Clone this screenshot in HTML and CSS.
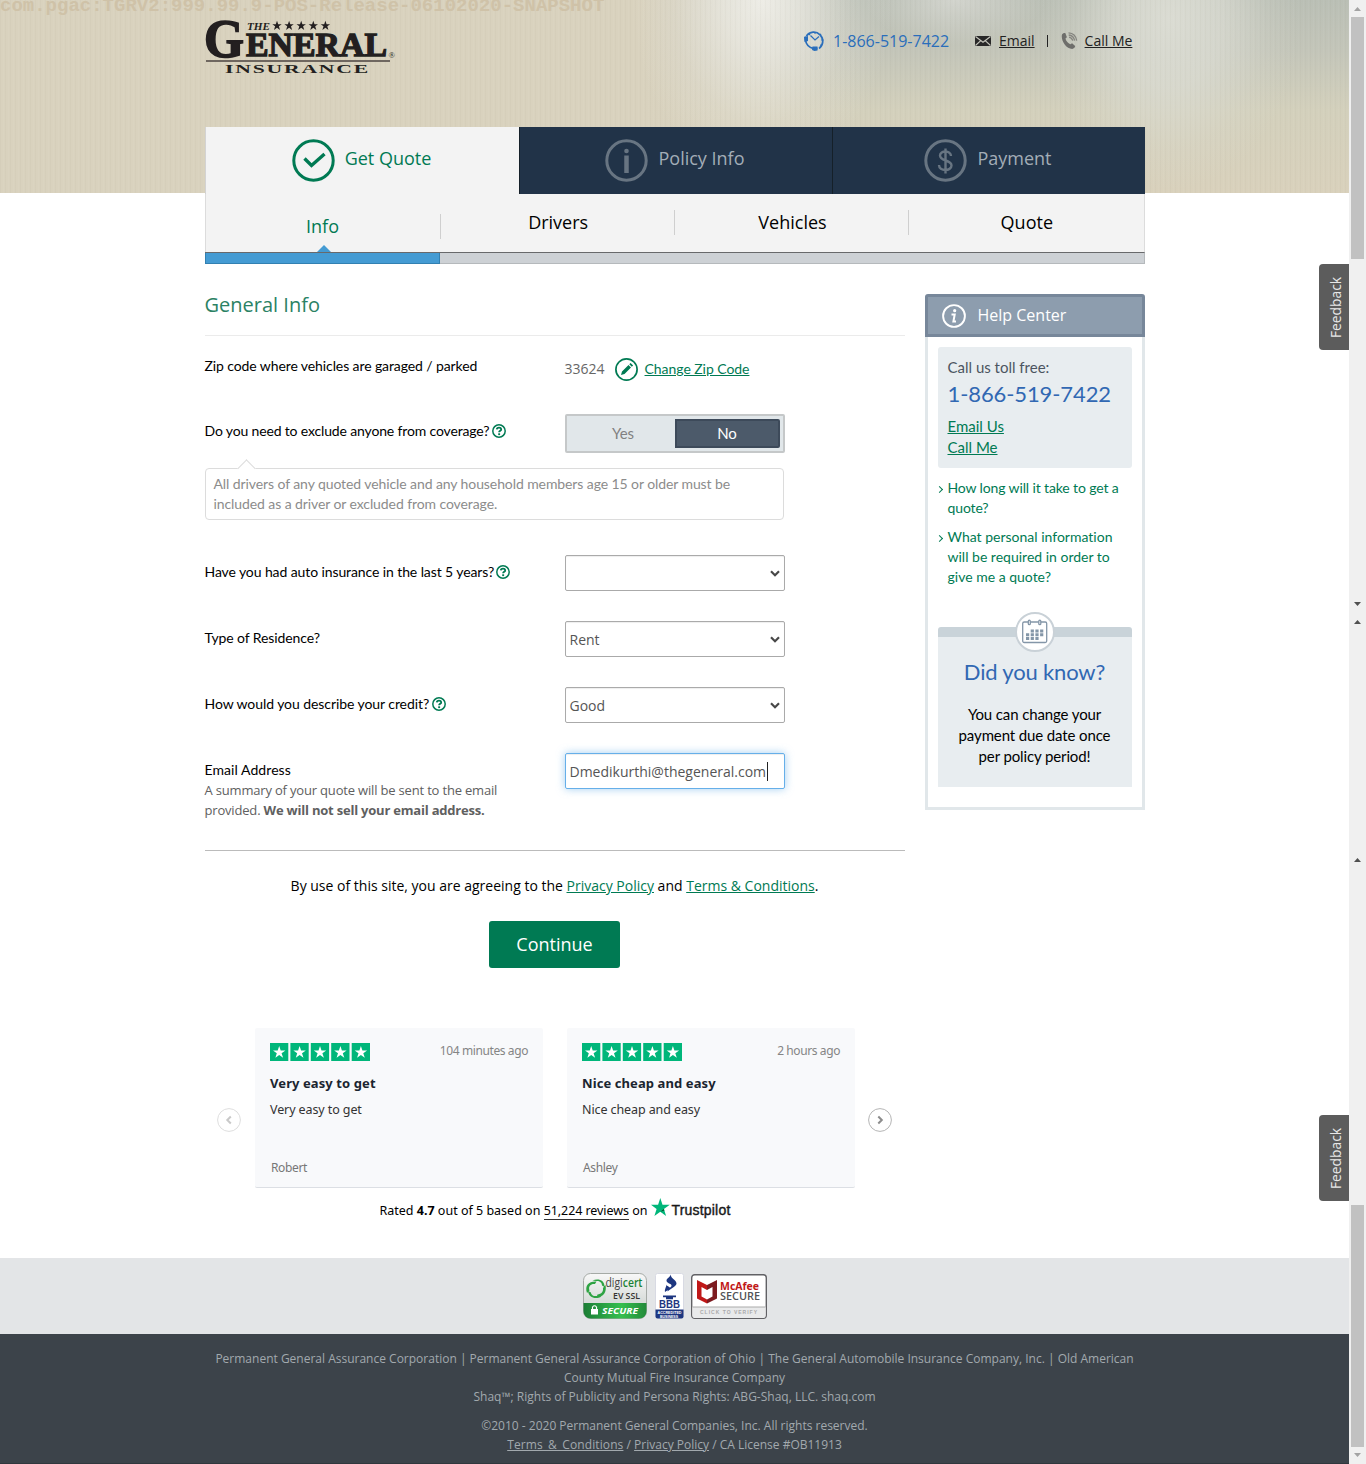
FILE: index.html
```html
<!DOCTYPE html>
<html lang="en">
<head>
<meta charset="utf-8">
<title>The General Insurance - Get Quote</title>
<link rel="stylesheet" href="styles.css">
</head>
<body>
<svg class="defs" width="0" height="0">
  <symbol id="help" viewBox="0 0 14 14"><circle cx="7" cy="7" r="6.2" fill="none" stroke="#007a53" stroke-width="1.5"/><path d="M4.8 5.4C4.9 3 9.2 3 9.2 5.4C9.2 6.8 7.1 6.9 7.1 8.3" fill="none" stroke="#007a53" stroke-width="1.8"/><rect x="6.2" y="9.3" width="1.9" height="1.8" fill="#007a53"/></symbol>
  <symbol id="stars" viewBox="0 0 100 18">
    <g fill="#00b67a"><rect width="18.3" height="18"/><rect x="20.4" width="18.3" height="18"/><rect x="40.8" width="18.3" height="18"/><rect x="61.2" width="18.3" height="18"/><rect x="81.7" width="18.3" height="18"/></g>
    <g fill="#fff"><path id="s" d="M9.2 2.9l1.5 4.5h4.7l-3.8 2.8 1.5 4.6-3.9-2.9-3.8 2.9 1.4-4.6L3 7.4h4.7z"/><use href="#s" x="20.4"/><use href="#s" x="40.8"/><use href="#s" x="61.2"/><use href="#s" x="81.7"/></g>
  </symbol>
</svg>
<div class="page">
  <div class="content">
    <header class="hero">
      <div class="build">com.pgac:TGRV2:999.99.9-POS-Release-06102020-SNAPSHOT</div>
      <div class="wrap top">
        <svg class="logo" width="192" height="56" viewBox="0 0 192 56" fill="#231f20" font-family="Liberation Serif" font-weight="bold">
          <text x="-1" y="37" font-size="54" textLength="40" lengthAdjust="spacingAndGlyphs" stroke="#231f20" stroke-width="1.6">G</text>
          <text x="41" y="36" font-size="33" textLength="141" lengthAdjust="spacingAndGlyphs" stroke="#231f20" stroke-width="1.3">ENERAL</text>
          <text x="42" y="9.5" font-size="11" font-style="italic" textLength="23" lengthAdjust="spacingAndGlyphs">THE</text>
          <g><path id="ls" d="M72 .8l1.200 3.400h3.500l-2.800 2.100 1.100 3.600-3-2.200-3 2.200 1.100-3.600-2.800-2.100h3.500z"/><use href="#ls" x="12.100"/><use href="#ls" x="24.200"/><use href="#ls" x="36.300"/><use href="#ls" x="48.400"/></g>
          <text x="183.500" y="37.500" font-size="8.500" font-weight="normal">®</text>
          <path d="M1 41H185" stroke="#4b4341" stroke-width="1.4"/>
          <text x="20" y="52.500" font-size="12" textLength="145" lengthAdjust="spacingAndGlyphs" letter-spacing="1">INSURANCE</text>
        </svg>
        <div class="contact">
          <svg width="24" height="24" viewBox="0 0 24 24" fill="none" stroke="#2a6ebb"><path d="M3.4 7A9 9 0 1 1 16 19.5M14 21" stroke-width="1.7"/><path d="M7.5 6.5l4.5 4.5 4-3.500M12 3v1.800M18.500 11h2M6 4.800l1 1.200M18 4.800l-1 1.200M18.300 16.500l-1-.8" stroke-width="1.2"/><path d="M2.500 7.500v3.500c.5 4 3.500 7.500 8 8.500h4" stroke-width="1.800"/><path d="M1 8l4-1v5l-3.500 1zM9.500 17.500h5v4l-3 .5-2.500-1z" fill="#2a6ebb" stroke="none"/></svg>
          <span class="phone">1-866-519-7422</span>
          <svg class="mail" width="16" height="10" viewBox="0 0 16 10"><rect width="16" height="10" fill="#282828"/><path d="M.5.5L8 6.200 15.500.5M.5 9.500l5-4.700M15.500 9.500l-5-4.700" fill="none" stroke="#c6c6bd" stroke-width="1.100"/></svg>
          <a class="email">Email</a><i></i>
          <svg class="ring" width="17" height="18" viewBox="0 0 17 18"><path d="M1 2.500C2.500 1 4 .8 4.500 1.500l1.300 3.500c0 .8-1.300 1-1.300 1.700.6 2.300 2.600 4.600 4.800 5.600.8.200 1-1 1.800-1l3 2.700c.5 1-1.400 2.900-2.900 2.900C5 17-.5 8 1 2.500z" fill="#6e6e6b"/><path d="M8 5.200c2 .3 3.200 1.500 3.700 3.500M7.700 3c3.300.3 5.300 2.300 5.900 5.700M7.500.8c4.500.2 7.500 3.200 8.200 7.900" fill="none" stroke="#85857f" stroke-width="1.300"/></svg>
          <a class="callme">Call Me</a>
        </div>
      </div>
    </header>

    <nav class="wrap nav">
      <div class="tabs">
        <div class="tab on"><svg width="43" height="43" viewBox="0 0 43 43" fill="none" stroke="#007a53"><circle cx="21.500" cy="21.500" r="19.700" stroke-width="3"/><path d="M12.500 19.500l7 7 13-11.500" stroke-width="3.400"/></svg><span>Get Quote</span></div>
        <div class="tab"><svg width="43" height="43" viewBox="0 0 43 43" fill="none" stroke="#687582"><circle cx="21.500" cy="21.500" r="19.700" stroke-width="3"/><circle cx="21.500" cy="12" r="2.300" fill="#687582" stroke="none"/><path d="M21.500 16.500v17.500" stroke-width="4.500"/></svg><span>Policy Info</span></div>
        <div class="tab last"><svg width="43" height="43" viewBox="0 0 43 43" fill="none" stroke="#687582"><circle cx="21.500" cy="21.500" r="19.700" stroke-width="3"/><path d="M21.500 9.500v25M27 17c0-6-11-6-11-.5 0 6 11.500 4 11.500 10 0 6-12.500 6-12.500-.5" stroke-width="2.400"/></svg><span>Payment</span></div>
      </div>
      <div class="steps">
        <div class="step active">Info<b></b></div><div class="step">Drivers</div><div class="step">Vehicles</div><div class="step">Quote</div>
      </div>
      <div class="progress"><div></div></div>
    </nav>

    <main class="wrap main">
      <section class="form">
        <h1>General Info</h1>
        <div class="row zip"><label>Zip code where vehicles are garaged / parked</label>
          <div class="zipval"><span>33624</span><svg width="23" height="23" viewBox="0 0 23 23"><circle cx="11.500" cy="11.500" r="10.600" fill="none" stroke="#007a53" stroke-width="1.700"/><path d="M6 17l1-3.500 6.500-6.500 2.500 2.500-6.500 6.500zM14.300 6.300L15.600 5l2.500 2.500-1.300 1.300z" fill="#007a53"/></svg><a>Change Zip Code</a></div></div>
        <div class="row exclude"><label>Do you need to exclude anyone from coverage?<svg class="q"><use href="#help"/></svg></label>
          <div class="toggle"><span>Yes</span><span class="sel">No</span></div></div>
        <div class="note">All drivers of any quoted vehicle and any household members age 15 or older must be included as a driver or excluded from coverage.</div>
        <div class="row"><label>Have you had auto insurance in the last 5 years?<svg class="q"><use href="#help"/></svg></label>
          <div class="field"><span></span><svg width="10" height="7"><path d="M1 1.300l4 3.900 4-3.900" fill="none" stroke="#484848" stroke-width="2.200"/></svg></div></div>
        <div class="row"><label>Type of Residence?</label>
          <div class="field"><span>Rent</span><svg width="10" height="7"><path d="M1 1.300l4 3.900 4-3.900" fill="none" stroke="#484848" stroke-width="2.200"/></svg></div></div>
        <div class="row credit"><label>How would you describe your credit?<svg class="q"><use href="#help"/></svg></label>
          <div class="field"><span>Good</span><svg width="10" height="7"><path d="M1 1.300l4 3.900 4-3.900" fill="none" stroke="#484848" stroke-width="2.200"/></svg></div></div>
        <div class="row mailrow"><div><label>Email Address</label><p class="hint">A summary of your quote will be sent to the email<br>provided. <strong>We will not sell your email address.</strong></p></div>
          <div class="field focus"><span class="addr">Dmedikurthi@thegeneral.com</span></div></div>
        <p class="terms">By use of this site, you are agreeing to the <a>Privacy Policy</a> and <a>Terms &amp; Conditions</a>.</p>
        <div class="go"><button>Continue</button></div>
        <div class="reviews">
          <svg class="arrow dim" width="24" height="24" viewBox="0 0 24 24" fill="none"><circle cx="12" cy="12" r="11.400" stroke="#dedede"/><path d="M13.800 8.500L10.300 12l3.500 3.500" stroke="#c9c9c9" stroke-width="2"/></svg>
          <article><div class="rhead"><svg width="100" height="18"><use href="#stars"/></svg><time>104 minutes ago</time></div><h2>Very easy to get</h2><p>Very easy to get</p><footer>Robert</footer></article>
          <article><div class="rhead"><svg width="100" height="18"><use href="#stars"/></svg><time>2 hours ago</time></div><h2>Nice cheap and easy</h2><p>Nice cheap and easy</p><footer>Ashley</footer></article>
          <svg class="arrow" width="24" height="24" viewBox="0 0 24 24" fill="none"><circle cx="12" cy="12" r="11.400" stroke="#b5b5b5"/><path d="M10.300 8.500l3.500 3.500-3.500 3.500" stroke="#8c8c8c" stroke-width="2"/></svg>
        </div>
        <div class="rated"><span>Rated <b>4.7</b> out of 5 based on <u>51,224 reviews</u> on</span><svg width="19" height="18" viewBox="0 0 19 18"><path d="M9.300 0l2.200 6.800h7.300l-5.900 4.300 2.200 6.900-5.800-4.200L3.400 18l2.200-6.900L0 6.800h7.100z" fill="#00b67a"/><path d="M13.400 12.600l-.5-1.500-3.600 2.700z" fill="#005128"/></svg><em>Trustpilot</em></div>
      </section>

      <aside class="help">
        <div class="helphead"><svg width="24" height="24" viewBox="0 0 24 24" fill="none" stroke="#fff"><circle cx="12" cy="12" r="10.900" stroke-width="1.900"/><circle cx="12.700" cy="6.700" r="1.600" fill="#fff" stroke="none"/><path d="M9.500 10.500h3.200l-1.300 7H14" stroke-width="2"/></svg><span>Help Center</span></div>
        <div class="helpbody">
          <div class="call"><p>Call us toll free:</p><strong>1-866-519-7422</strong><a>Email Us</a><a>Call Me</a></div>
          <ul><li class="tight">How long will it take to get a<br>quote?</li><li>What personal information<br>will be required in order to<br>give me a quote?</li></ul>
          <div class="know">
            <svg class="cal" width="40" height="40" viewBox="0 0 40 40" fill="none"><circle cx="20" cy="20" r="19" fill="#fff" stroke="#c9d1d7" stroke-width="2"/><g stroke="#8496a8" stroke-width="1.300"><rect x="7.700" y="10" width="24" height="20.500" rx="1.500"/><rect x="13.300" y="8.200" width="2" height="4.500" rx="1" fill="#fff"/><rect x="23.800" y="8.200" width="2" height="4.500" rx="1" fill="#fff"/></g><path d="M15.700 19h13.500M11 22.800h18.200M11 26.500h13.500" stroke="#8496a8" stroke-width="3" stroke-dasharray="3.200 1.500"/></svg>
            <h3>Did you know?</h3><p>You can change your<br>payment due date once<br>per policy period!</p>
          </div>
        </div>
      </aside>
    </main>

    <div class="badges">
      <svg width="64" height="46" viewBox="0 0 64 46"><defs><linearGradient id="dg" x2="0" y2="1"><stop stop-color="#f8f8f8"/><stop offset=".6" stop-color="#d9dddb"/></linearGradient><linearGradient id="dgr" x2="1" y2="0"><stop stop-color="#1b7d35"/><stop offset=".6" stop-color="#35bf4e"/><stop offset="1" stop-color="#238a3a"/></linearGradient></defs><rect x=".5" y=".5" width="63" height="45" rx="7" fill="url(#dg)" stroke="#a5aaa6"/><path d="M.5 30h63v8.500a7 7 0 0 1-7 7h-49a7 7 0 0 1-7-7z" fill="url(#dgr)"/><g fill="#2ea343"><path d="M4 20C1.500 12 6 8 13.500 8.500L12 11c-4-.5-7 2-5.500 6.500zM9.500 7.500C15 5 22 7 21.500 14l-2.500-1.500c0-3.500-3-5-6-4.500zM22.500 12c1.500 7-2 12-9 12.500l1-3c4-.5 6-3 5.500-6.500zM18.500 23.500c-6 3.500-13 1-13.500-5.500l2.700 1.200c.8 3.500 3.800 4.500 7 3.500z"/></g><text x="22.500" y="14" font-family="Open Sans" font-size="12" textLength="37" lengthAdjust="spacingAndGlyphs" fill="#444">digi<tspan fill="#1a8236" font-weight="600">cert</tspan></text><text x="30" y="25.500" font-family="Open Sans" font-size="9.500" font-weight="600" textLength="27" lengthAdjust="spacingAndGlyphs" fill="#333">EV SSL</text><rect x="8" y="36" width="7" height="5.500" fill="#fff"/><path d="M9.500 36v-2q2-2.500 4 0v2" fill="none" stroke="#fff" stroke-width="1.200"/><text x="19" y="41" font-family="Open Sans" font-size="9.500" font-weight="bold" font-style="italic" textLength="36" lengthAdjust="spacingAndGlyphs" fill="#fff">SECURE</text></svg>
      <svg width="29" height="46" viewBox="0 0 29 46"><rect x=".5" y=".5" width="28" height="45" rx="2" fill="#fff" stroke="#d8dae3"/><path d="M.5 36.500h28v7a2 2 0 0 1-2 2h-24a2 2 0 0 1-2-2z" fill="#1d3680"/><path d="M16 1.500c-1 4 5.500 5 5.500 9 0 3-6 5-9 8 1-4 4-4 4-6s-5-2-5-5c0-2 3-3 4.500-6zM11.500 11.500c0 2 4 2 3.500 4-.5 1.500-3.500 2-5 3.500-.5-3 1-4 1.500-7.500zM8 22.500h13v1.700H8zM11 24.200h7v2h-7z" fill="#1d3680"/><text x="4" y="34.500" font-family="Liberation Sans" font-weight="bold" font-size="10.500" textLength="21" lengthAdjust="spacingAndGlyphs" fill="#1d3680">BBB</text><text x="2.500" y="40.700" font-family="Liberation Sans" font-weight="bold" font-size="4" textLength="24" lengthAdjust="spacingAndGlyphs" fill="#fff">ACCREDITED</text><text x="5" y="44.500" font-family="Liberation Sans" font-weight="bold" font-size="4" textLength="18" lengthAdjust="spacingAndGlyphs" fill="#fff">BUSINESS</text></svg>
      <svg width="76" height="45" viewBox="0 0 76 45"><rect x=".7" y=".7" width="74.600" height="43.600" rx="3" fill="#fff" stroke="#616165" stroke-width="1.400"/><path d="M1.400 33h73.200v9a2 2 0 0 1-2 2H3.400a2 2 0 0 1-2-2z" fill="#e9eaeb"/><path d="M1.400 33h73.200" stroke="#aaa"/><path d="M6 6l10 5v5l-5.500-3v9.500l5.500 3V29.500L6 24.500z" fill="#c01818"/><path d="M26 6l-10 5v5l5.500-3v9.500l-5.500 3V29.500l10-5z" fill="#7d1b20"/><text x="29" y="15.500" font-family="Open Sans" font-size="10.500" font-weight="bold" textLength="39" lengthAdjust="spacingAndGlyphs" fill="#c01818">McAfee</text><text x="29" y="25.700" font-family="Open Sans" font-size="10.500" font-weight="600" textLength="40" lengthAdjust="spacingAndGlyphs" fill="#515357">SECURE</text><text x="9" y="40.300" font-family="Liberation Sans" font-size="5" font-weight="bold" textLength="57" fill="#a9a9aa">CLICK TO VERIFY</text></svg>
    </div>
    <footer class="legal">
      <p>Permanent General Assurance Corporation | Permanent General Assurance Corporation of Ohio | The General Automobile Insurance Company, Inc. | Old American<br>County Mutual Fire Insurance Company<br>Shaq™; Rights of Publicity and Persona Rights: ABG-Shaq, LLC. shaq.com</p>
      <p>©2010 - 2020 Permanent General Companies, Inc. All rights reserved.<br><a class="tc">Terms_&amp;_Conditions</a> / <a>Privacy Policy</a> / CA License #OB11913</p>
    </footer>
    <div class="feedback first">Feedback</div>
    <div class="feedback second">Feedback</div>
  </div>
  <svg class="scroll" width="17" height="1464"><rect width="17" height="1464" fill="#f0f0f0"/><g fill="#c1c1c1"><rect x="2" y="17" width="13" height="242"/><rect x="2" y="1205" width="13" height="242"/></g><path d="M5 11l3.500-4 3.500 4zM5 1453h7l-3.500 4z" fill="#a3a3a3"/><path d="M5 602h7l-3.500 4zM5 624l3.500-4 3.500 4zM5 862l3.500-4 3.500 4z" fill="#505050"/></svg>
</div>
</body>
</html>
```
FILE: styles.css
```css
* { box-sizing: border-box; }
body { margin: 0; background: #fff; color: #000; font-family: "Open Sans", sans-serif; }
h1, h2, h3, p, ul { margin: 0; padding: 0; font-weight: 400; }
svg { display: block; flex: none; }
.defs { position: absolute; }
.page { display: flex; height: 1464px; }
.content { width: 1349px; position: relative; display: flex; flex-direction: column; }
.wrap { width: 940px; margin-left: 204.5px; }

.hero {
  height: 193px; flex: none; margin-bottom: -66px;
  background:
    repeating-linear-gradient(90deg, rgba(110,105,80,.035) 0 1px, transparent 1px 3px, rgba(255,255,255,.035) 3px 4px, transparent 4px 5px),
    radial-gradient(ellipse 130px 180px at 762px 0, rgba(244,243,238,.85), rgba(244,243,238,.6) 30%, rgba(244,243,238,.18) 68%, rgba(244,243,238,0)),
    radial-gradient(ellipse 90px 45px at 955px 0, rgba(216,217,211,.8), rgba(216,217,211,.4) 50%, rgba(216,217,211,0)),
    radial-gradient(ellipse 130px 170px at 1170px 20px, rgba(220,221,212,.95), rgba(220,221,212,.7) 40%, rgba(220,221,212,.2) 75%, rgba(220,221,212,0)),
    linear-gradient(90deg, rgba(217,210,190,1) 640px, rgba(217,210,190,0) 860px),
    linear-gradient(180deg, #babfb5 0, #c3c5b9 50px, #d3d0bc 110px, #d9d1bc 193px);
}
.build { height: 15px; font: bold 19px/12px "Liberation Mono", monospace; color: #cfc2a8; white-space: nowrap; }
.top { display: flex; justify-content: space-between; align-items: flex-start; }
.logo { margin-top: 5px; overflow: visible; }
.contact { display: flex; align-items: center; height: 24px; margin-top: 14px; width: 341.500px; }
.phone { font-size: 16px; color: #2a6ebb; margin-left: 6px; width: 142px; white-space: nowrap; }
.contact a { font-size: 14px; line-height: 20px; margin-top: -1px; text-decoration: underline; color: #222; white-space: nowrap; }
.contact a.email { margin-left: 8px; }
.contact i { width: 1px; height: 12px; background: #222; margin: 0 13px 0 12px; }
.contact a.callme { margin-left: 7px; }

.tabs { display: flex; height: 67px; }
.tab { width: 313px; background: #213348; color: #a3adb7; border-left: 1px solid #152029; display: flex; justify-content: center; gap: 10px; padding: 12px 1px 0 0; font-size: 18px; }
.tab span { line-height: 24px; padding-top: 7px; }
.tab.on { width: 314px; background: #f3f3f3; color: #007a53; border-left-color: #d3d3d3; }
.steps { display: flex; height: 58px; background: #f3f3f3; border: 1px solid #dcdcdc; border-width: 0 1px; }
.step { flex: 1; text-align: center; font-size: 18px; line-height: 24px; padding: 16px 0 0 1px; background: linear-gradient(#cfcfcf, #cfcfcf) no-repeat right 16px / 1px 25px; }
.step:first-child { flex: 0 0 235px; }
.step:last-child { background: none; }
.step.active { color: #007a53; padding: 20px 1px 0 0; background-position: right 20px; position: relative; }
.step b { position: absolute; left: 111px; bottom: 0; border: 7px solid transparent; border-top: 0; border-bottom-color: #449bd3; }
.progress { height: 12px; background: #cdd1d5; border: 1px solid #b5b9bc; border-top: 1px solid #68696b; border-left: 0; }
.progress div { height: 11px; width: 235px; background: #449bd3; border: 1px solid #3280b1; border-top: 0; }

.main { display: flex; justify-content: space-between; }
.form { width: 700px; padding-top: 27px; }
h1 { font-size: 20px; line-height: 28px; color: #2b8264; height: 45px; border-bottom: 1px solid #ebebeb; }
.row { display: flex; height: 66px; }
.row > :first-child { width: 360px; }
label { display: flex; align-items: flex-start; font: 14px/20px Lato, sans-serif; letter-spacing: -.1px; padding-top: 7px; white-space: nowrap; }
.q { width: 14px; height: 14px; margin: 3px 0 0 2px; }
.zip label { padding-top: 20px; }
.zipval { display: flex; align-items: center; height: 24px; margin-top: 21px; color: #666; font-size: 14px; }
.zipval span { line-height: 20px; }
.zipval svg { margin: 0 7px 0 10px; }
.zipval a { font: 14px/20px Lato, sans-serif; letter-spacing: -.05px; color: #007a53; text-decoration: underline; }
.exclude label { padding-top: 19px; letter-spacing: -.15px; }
.exclude .q { margin-left: 3px; }
.credit label { letter-spacing: -.07px; }
.credit .q { margin-left: 3px; }
.toggle { width: 220px; height: 39px; margin-top: 12px; padding: 3px; border: 2px solid #c5c8c9; border-radius: 2px; background: #e1e7ea; display: flex; }
.toggle span { flex: 1; text-align: center; font: 15px/29px Lato, sans-serif; color: #818181; padding-left: 2px; }
.toggle .sel { flex: 0 0 105px; line-height: 25px; background: #4c5a6a; border: 2px solid #3d4a5a; border-radius: 0 2px 2px 0; color: #fff; padding: 0; }
.note { position: relative; width: 579px; height: 52px; margin-bottom: 35px; padding: 5px 8px; border: 1px solid #dcdcdc; border-radius: 4px; font: 14px/20px Lato, sans-serif; letter-spacing: -.09px; color: #8c8c8c; }
.note::before { content: ""; position: absolute; left: 34px; top: -7px; width: 12px; height: 12px; background: #fff; border: 1px solid #dcdcdc; border-width: 1px 0 0 1px; transform: rotate(45deg); }
.field { width: 220px; height: 36px; border: 1px solid #aaa; border-radius: 2px; display: flex; align-items: center; justify-content: space-between; padding: 0 4px; font-size: 14px; color: #555; box-shadow: inset 0 1px 1px rgba(0,0,0,.07); }
.focus { border-color: #66afe9; box-shadow: inset 0 1px 1px rgba(0,0,0,.07), 0 0 8px rgba(102,175,233,.6); }
.addr { border-right: 1px solid #222; line-height: 19px; padding-right: .5px; }
.mailrow { height: 98px; border-bottom: 1px solid #bbb; width: 700px; }
.mailrow label { letter-spacing: .07px; }
.hint { font-size: 13px; line-height: 20px; letter-spacing: -.18px; color: #606060; white-space: nowrap; }
.hint strong { letter-spacing: -.21px; }
.terms { text-align: center; font-size: 14px; line-height: 20px; margin: 25px 0; }
.terms a { color: #007a53; text-decoration: underline; }
.go { display: flex; justify-content: center; padding-right: 1px; }
button { width: 131px; height: 47px; border: 0; border-radius: 3px; background: #007a53; color: #fff; font: 18px "Open Sans", sans-serif; padding: 0 0 2px 1px; }
.reviews { display: flex; align-items: center; margin: 60px 0 0 12.500px; }
article { width: 288px; height: 160px; margin-left: 24px; padding: 14px 15px 0; background: #f8f9fb; border-bottom: 1px solid #dcdfe4; border-radius: 2px; font-family: "Noto Sans", sans-serif; color: #333; display: flex; flex-direction: column; }
.dim + article { margin-left: 14px; }
article + .arrow { margin-left: 13px; }
.arrow { margin-top: 24px; }
.rhead { display: flex; justify-content: space-between; align-items: center; height: 18px; }
.rhead svg { margin-top: 2px; }
time { font-size: 12px; line-height: 16px; letter-spacing: -.4px; color: #858585; }
article h2 { font-size: 13px; font-weight: 700; line-height: 18px; letter-spacing: .09px; margin-top: 14px; color: #1b2530; }
article p { font-size: 12.500px; line-height: 18px; letter-spacing: -.1px; margin-top: 9px; }
article footer { font-size: 12px; line-height: 16px; letter-spacing: -.35px; color: #777; margin-top: 41px; padding-left: 1px; }
.rated { display: flex; justify-content: center; font: 12.500px/18px "Noto Sans", sans-serif; padding: 10px 0 0 1px; height: 30px; white-space: nowrap; }
.rated u { text-decoration: none; border-bottom: 1px solid #333; letter-spacing: -.07px; }
.rated span { padding-top: 4px; }
.rated svg { margin: 0 1px 0 4px; }
.rated em { font: 500 14px/18px "Liberation Sans", sans-serif; letter-spacing: .2px; padding-top: 3px; -webkit-text-stroke: .4px #191919; color: #191919; }

.help { width: 220px; height: 516px; margin-top: 30px; }
.helphead { height: 43px; background: #8d9dae; border: 3px solid #77879a; border-radius: 3px 3px 0 0; display: flex; align-items: center; gap: 12px; padding: 0 0 1px 14px; font-size: 16px; color: #fff; }
.helphead svg { margin-top: 2px; }
.helpbody { height: 473px; border: 3px solid #e1e7ea; border-top: 0; padding: 10px; font-family: Lato, sans-serif; }
.call { height: 121px; background: #e8edf0; border-radius: 3px; padding: 10px; font-size: 15px; line-height: 21px; color: #4c5561; }
.call strong { display: block; font-size: 22px; line-height: 32px; letter-spacing: -.1px; font-weight: 400; color: #3168b3; margin-bottom: 6px; white-space: nowrap; }
.call a { display: block; color: #007a53; text-decoration: underline; }
.help ul { list-style: none; padding-top: 10px; }
.help li { position: relative; padding-left: 10px; margin-bottom: 9px; font-size: 14px; line-height: 20px; color: #007a53; white-space: nowrap; font-variant-ligatures: none; }
.help li.tight { letter-spacing: -.13px; }
.help li::before { content: ""; position: absolute; left: -1px; top: 9px; width: 4px; height: 4px; border: 1.500px solid #007a53; border-width: 1.500px 1.500px 0 0; transform: rotate(45deg); }
.know { position: relative; height: 160px; margin-top: 40px; padding-top: 28px; border-top: 10px solid #c9d3d9; border-radius: 3px 3px 0 0; background: #e8edf0; text-align: center; }
.help h3 { font-size: 22px; line-height: 34px; letter-spacing: -.17px; color: #3168b3; margin-top: -10px; }
.know p { font-size: 15px; line-height: 21px; letter-spacing: -.12px; margin-top: 15px; }
.cal { position: absolute; left: 77px; top: -25px; }

.badges { position: absolute; top: 1258px; left: 0; width: 1349px; height: 76px; background: #e3e5e7; display: flex; justify-content: center; align-items: center; gap: 8px; }
.badges svg:last-child { margin-left: -1px; }
.legal { margin-top: auto; height: 130px; background: #3c434a; border-bottom: 1px solid #30373d; color: #a2a9ae; font-size: 12px; line-height: 19px; text-align: center; padding-top: 15px; flex: none; }
.legal p { margin-bottom: 10px; }
.legal a { text-decoration: underline; }
.legal .tc { letter-spacing: .1px; }
.feedback { position: absolute; right: 0; top: 264px; width: 30px; height: 86px; background: #5c5c5c; border-radius: 0 4px 4px 0; color: #e8e8e8; font-size: 13.800px; line-height: 27px; writing-mode: vertical-rl; transform: rotate(180deg); text-align: center; }
.feedback { padding-right: 3px; }
.second { top: 1115px; }
```
